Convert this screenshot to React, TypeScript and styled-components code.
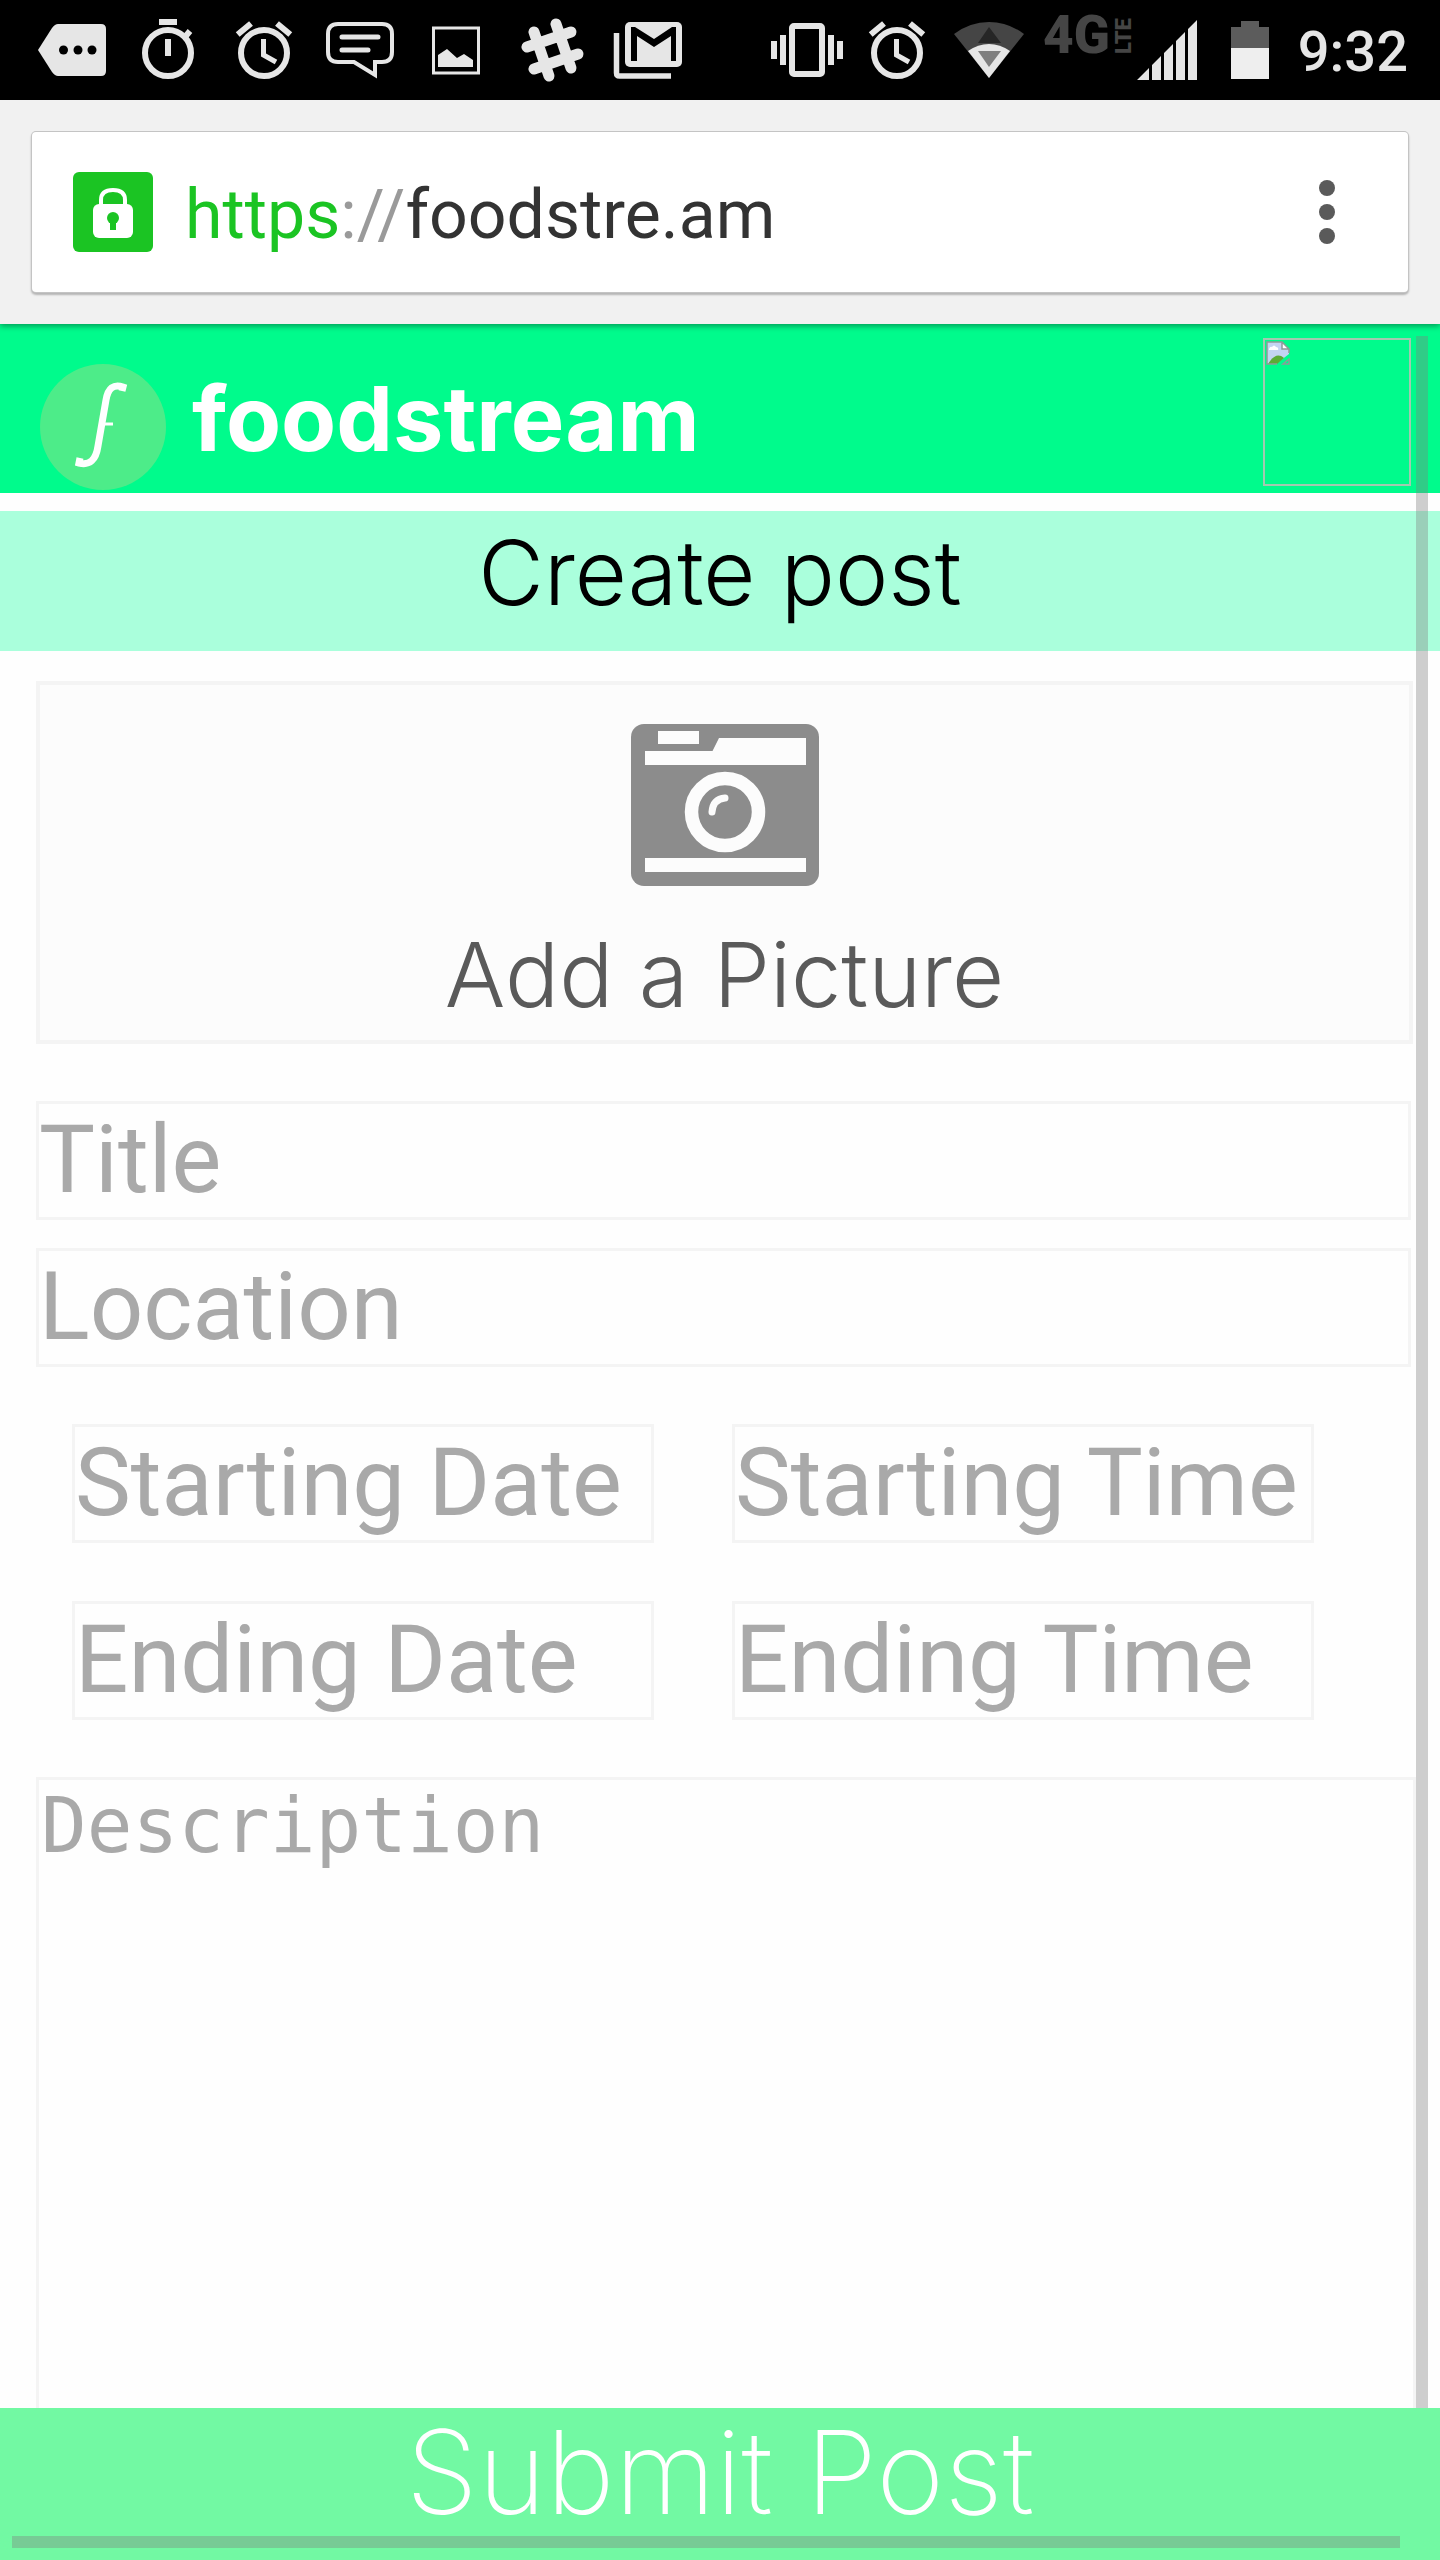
import React from "react";
import styled, { createGlobalStyle } from "styled-components";

const ink = "#e6e6e6";
const uiFont = `Roboto, "Noto Sans", sans-serif`;
const brandFont = `Inter, "Open Sans", sans-serif`;

const GlobalStyle = createGlobalStyle`
  *, *::before, *::after { box-sizing: border-box; }
  body { margin: 0; background: #fefefe; font-family: ${uiFont}; }
`;

const Screen = styled.div`
  position: relative;
  display: flex;
  flex-direction: column;
  min-height: 100vh;
`;

/* ---------- system status bar ---------- */

const StatusBar = styled.div`
  display: flex;
  justify-content: space-between;
  align-items: center;
  height: 100px;
  padding: 0 32px 0 36px;
  background: #000;
`;

const StatusGroup = styled.div<{ $gap: number }>`
  display: flex;
  align-items: center;
  gap: ${(p) => p.$gap}px;
`;

const StatusIcon = styled.svg`
  display: block;
  flex: none;
  height: 72px;
  overflow: visible;
`;

const Clock = styled.time`
  padding-top: 4px;
  color: ${ink};
  font-size: 56px;
  font-weight: 500;
  line-height: 64px;
`;

/* ---------- browser toolbar ---------- */

const Toolbar = styled.div`
  position: relative;
  z-index: 1;
  padding: 32px;
  background: #f1f1f1;
  box-shadow: 0 2px 6px rgba(0, 0, 0, 0.4);
`;

const Omnibox = styled.div`
  display: flex;
  align-items: center;
  height: 160px;
  padding: 0 73px 0 41px;
  background: #fff;
  border-radius: 4px;
  box-shadow: 0 0 0 1px #c4c4c4, 0 2px 2px 1px rgba(0, 0, 0, 0.25);
`;

const LockBadge = styled.svg`
  display: block;
  flex: none;
  width: 80px;
  height: 80px;
`;

const Address = styled.a`
  flex: 1;
  padding: 6px 0 0 32px;
  color: #333;
  font-size: 68px;
  line-height: 80px;
  text-decoration: none;
`;

const AddressPart = styled.span<{ $color: string }>`
  color: ${(p) => p.$color};
`;

const MenuButton = styled.button`
  display: flex;
  flex-direction: column;
  gap: 8px;
  padding: 0;
  border: 0;
  background: none;
`;

const Dot = styled.span`
  width: 16px;
  height: 16px;
  border-radius: 50%;
  background: #5a5a5a;
`;

/* ---------- site header ---------- */

const Header = styled.header`
  display: flex;
  justify-content: space-between;
  align-items: flex-start;
  height: 169px;
  padding: 14px 29px 0 40px;
  background: #00fb8c;
`;

const Brand = styled.a`
  display: flex;
  align-items: center;
  gap: 26px;
  padding-top: 25px;
  color: #fff;
  font-family: ${brandFont};
  font-size: 90px;
  font-weight: 700;
  line-height: 112px;
  text-decoration: none;
`;

const BrandName = styled.span`
  padding-bottom: 16px;
`;

const Avatar = styled.svg`
  display: block;
  width: 148px;
  height: 148px;
`;

const PageTitle = styled.h1`
  margin: 18px 0 0;
  padding: 6px 0 22px;
  background: #aaffdc;
  color: #000;
  font-family: ${brandFont};
  font-size: 90px;
  font-weight: 300;
  line-height: 112px;
  text-align: center;
`;

/* ---------- form ---------- */

const Form = styled.form`
  display: flex;
  flex: 1;
  flex-direction: column;
  padding-top: 30px;
`;

const Fields = styled.div`
  display: flex;
  flex: 1;
  flex-direction: column;
  gap: 57px;
  padding: 0 24px 0 36px;
`;

const PictureButton = styled.button`
  display: flex;
  flex-direction: column;
  align-items: center;
  gap: 33px;
  margin-right: 3px;
  padding: 39px 0 9px;
  border: 4px solid #f4f4f4;
  background: #fcfcfc;
  color: #5a5a5a;
  font-family: ${brandFont};
  font-size: 90px;
  font-weight: 300;
  line-height: 112px;
`;

const FieldStack = styled.div`
  display: flex;
  flex-direction: column;
  gap: 28px;
  margin-right: 5px;
`;

const Schedule = styled.div`
  display: grid;
  grid-template-columns: 1fr 1fr;
  gap: 58px 78px;
  padding: 0 102px 0 36px;
`;

const TextField = styled.input`
  display: block;
  width: 100%;
  min-width: 0;
  height: 119px;
  padding: 0 0 1px;
  border: 3px solid #f4f4f4;
  border-radius: 0;
  background: #fefefe;
  color: #333;
  font-family: ${uiFont};
  font-size: 94px;
  outline: 0;
  &::placeholder { color: #a9a9a9; opacity: 1; }
`;

const Description = styled.textarea`
  display: block;
  flex: 1;
  width: 100%;
  min-height: 320px;
  padding: 2px 0 0 2px;
  border: 3px solid #f4f4f4;
  border-bottom: 0;
  border-radius: 0;
  background: #fefefe;
  color: #333;
  font-family: "DejaVu Sans Mono", monospace;
  font-size: 76px;
  line-height: 88px;
  outline: 0;
  resize: none;
  &::placeholder { color: #a9a9a9; opacity: 1; }
`;

const SubmitButton = styled.button`
  height: 152px;
  padding: 0 0 24px;
  border: 0;
  background: #72f9a3;
  color: #fff;
  font-family: ${brandFont};
  font-size: 116px;
  font-weight: 200;
  line-height: 128px;
`;

/* ---------- overlay scroll indicators ---------- */

const ScrollThumb = styled.div<{ $axis: "x" | "y" }>`
  position: absolute;
  z-index: 2;
  background: rgba(128, 128, 128, 0.376);
  ${(p) =>
    p.$axis === "y"
      ? "top: 336px; right: 12px; bottom: 152px; width: 12px;"
      : "left: 12px; right: 40px; bottom: 12px; height: 12px;"}
`;

const MoreIcon = () => (
  <StatusIcon width="72" viewBox="0 0 72 72">
    <path d="M2 36 16 14q3-4 6-4H65q5 0 5 5V57q0 5-5 5H22q-3 0-6-4Z" fill={ink} />
    <circle cx="27.5" cy="36" r="4.5" />
    <circle cx="42" cy="36" r="4.5" />
    <circle cx="56" cy="36" r="4.5" />
  </StatusIcon>
);

const TimerIcon = () => (
  <StatusIcon width="72" viewBox="0 0 72 72" fill="none" stroke={ink} strokeWidth="6">
    <circle cx="36" cy="39" r="23" />
    <path d="M27 8H45M36 25V42M53 23l5-6" />
  </StatusIcon>
);

const AlarmIcon = () => (
  <StatusIcon width="72" viewBox="0 0 72 72" fill="none" stroke={ink} strokeWidth="6">
    <circle cx="36" cy="39" r="23" />
    <path d="M9.700 20.500 23 9.500M49 9.500l13.300 11" />
    <path d="M35.500 25V41L48 48" strokeWidth="5" />
  </StatusIcon>
);

const MessageIcon = () => (
  <StatusIcon width="72" viewBox="0 0 72 72" fill="none" stroke={ink} strokeWidth="4">
    <path d="M14 10H58Q68 10 68 20V38Q68 48 58 48H51V61L30 48H14Q4 48 4 38V20Q4 10 14 10Z" />
    <path d="M18 23H54M18 36H44" strokeWidth="5" strokeLinecap="round" />
  </StatusIcon>
);

const PhotoIcon = () => (
  <StatusIcon width="72" viewBox="0 0 72 72">
    <rect x="13.500" y="14" width="45" height="45" fill="none" stroke={ink} strokeWidth="3" />
    <path d="M18 41 27 35 37 44 44 40 53 46V53H18Z" fill={ink} />
  </StatusIcon>
);

const HashIcon = () => (
  <StatusIcon width="72" viewBox="0 0 72 72" fill="none" stroke={ink} strokeWidth="11" strokeLinecap="round">
    <path d="M18 18 33 62M40 10 55 54M11 33 55 18M18 55 62 40" />
  </StatusIcon>
);

const MailIcon = () => (
  <StatusIcon width="72" viewBox="0 0 72 72">
    <path d="M4.500 19V59Q4.500 62 7.500 62H59" fill="none" stroke={ink} strokeWidth="5.500" />
    <rect x="13" y="8" width="57" height="45" rx="5" fill={ink} />
    <path d="M19 47V13H23L42 25 60 13H64V47H59V22L42 33 25 22V47Z" />
  </StatusIcon>
);

const VibrateIcon = () => (
  <StatusIcon width="72" viewBox="0 0 72 72" fill={ink}>
    <rect x="21" y="12" width="30" height="48" rx="2" fill="none" stroke={ink} strokeWidth="6" />
    <path d="M0 27H6V45H0ZM9 21H15V51H9ZM57 21H63V51H57ZM66 27H72V45H66Z" />
  </StatusIcon>
);

const WifiIcon = () => (
  <StatusIcon width="72" viewBox="0 0 72 72">
    <path d="M38 64 3 20Q19 8 38 8T73 20Z" fill="#454545" />
    <path d="M27 29 38 13 50 29Z" fill="#262626" />
    <path d="M38 64 17 37Q27 30 38 30T59 37Z" fill={ink} />
    <path d="M27 37H50L38 53Z" fill="#7f7f7f" />
  </StatusIcon>
);

const SignalIcon = () => (
  <StatusIcon width="158" viewBox="0 0 158 72">
    <g fill="#454545" fontFamily="Roboto, sans-serif">
      <text x="2" y="39" fontSize="53" fontWeight="900">4G</text>
      <text transform="translate(90 40) rotate(-90)" fontSize="22" fontWeight="900">LTE</text>
    </g>
    <path
      d="M96 66 108 54V66ZM111 66V51L120 42V66ZM123 66V39L132 30V66ZM135 66V27L144 18V66ZM147 66V15L156 6V66Z"
      fill={ink}
    />
  </StatusIcon>
);

const BatteryIcon = () => (
  <StatusIcon width="63" viewBox="0 0 63 72">
    <path d="M14 34V13H24V7H42V13H52V34Z" fill="#5c5c5c" />
    <path d="M14 34H52V65H14Z" fill="#eee" />
  </StatusIcon>
);

const CameraIcon = () => (
  <svg width="188" height="162" viewBox="0 0 188 162">
    <rect width="188" height="162" rx="13" fill="#8c8c8c" />
    <path
      d="M27 7H68V20H27ZM14 27H81.500L88 14H175V41H14ZM14 134H175V148H14Z"
      fill="#fcfcfc"
    />
    <g fill="none" stroke="#fcfcfc">
      <circle cx="94" cy="88" r="33.500" strokeWidth="13.500" />
      <path d="M81 88Q82 75 94 74" strokeWidth="7" strokeLinecap="round" />
    </g>
  </svg>
);

const LogoMark = () => (
  <svg width="126" height="126" viewBox="0 0 126 126">
    <circle cx="63" cy="63" r="63" fill="#4dec89" />
    <g fill="none" stroke="#fff">
      <path d="M82 27 83 23Q69 18 66 36L58 82Q55 103 39 99L40 94" strokeWidth="7" />
      <path d="M62 60H73" strokeWidth="3" />
    </g>
  </svg>
);

const BrokenAvatar = () => (
  <Avatar viewBox="0 0 148 148" role="img" aria-label="Profile picture">
    <rect x="1" y="1" width="146" height="146" fill="none" stroke="#a3c9b0" strokeWidth="2" />
    <path d="M4 4H19L26 11V16L13 26H4Z" fill="#c3d4f2" />
    <path d="M6 11q1-3 3-2 2-3 4 0 3 0 2 3H6Z" fill="#fff" />
    <path d="M5 26Q13 13 21 20L14 26Z" fill="#5cab36" />
    <path d="M19 4V11H26Z" fill="#fff" />
    <path d="M14 26H4V4H19L26 11V15M19 4V11H26M20 26H26V21Z" fill="none" stroke="#8f9a98" strokeWidth="1.500" />
  </Avatar>
);

export default function App() {
  return (
    <Screen>
      <GlobalStyle />
      <StatusBar>
        <StatusGroup $gap={24}>
          <MoreIcon />
          <TimerIcon />
          <AlarmIcon />
          <MessageIcon />
          <PhotoIcon />
          <HashIcon />
          <MailIcon />
        </StatusGroup>
        <StatusGroup $gap={18}>
          <VibrateIcon />
          <AlarmIcon />
          <WifiIcon />
          <SignalIcon />
          <BatteryIcon />
          <Clock>9:32</Clock>
        </StatusGroup>
      </StatusBar>

      <Toolbar>
        <Omnibox>
          <LockBadge viewBox="0 0 80 80">
            <rect width="80" height="80" rx="6" fill="#1bc423" />
            <path d="M28 34V28Q28 18 40 18T52 28V34" fill="none" stroke="#fff" strokeWidth="4" />
            <rect x="20" y="32" width="40" height="34" rx="6" fill="#fff" />
            <circle cx="40" cy="46" r="6" fill="#1bc423" />
            <path d="M37 48H43V58H37Z" fill="#1bc423" />
          </LockBadge>
          <Address href="#">
            <AddressPart $color="#1bc423">https</AddressPart>
            <AddressPart $color="#9a9a9a">://</AddressPart>
            foodstre.am
          </Address>
          <MenuButton type="button" aria-label="Menu">
            <Dot />
            <Dot />
            <Dot />
          </MenuButton>
        </Omnibox>
      </Toolbar>

      <Header>
        <Brand href="#">
          <LogoMark />
          <BrandName>foodstream</BrandName>
        </Brand>
        <BrokenAvatar />
      </Header>
      <PageTitle>Create post</PageTitle>

      <Form onSubmit={(e: React.FormEvent) => e.preventDefault()}>
        <Fields>
          <PictureButton type="button">
            <CameraIcon />
            Add a Picture
          </PictureButton>
          <FieldStack>
            <TextField aria-label="Title" placeholder="Title" />
            <TextField aria-label="Location" placeholder="Location" />
          </FieldStack>
          <Schedule>
            <TextField aria-label="Starting Date" placeholder="Starting Date" />
            <TextField aria-label="Starting Time" placeholder="Starting Time" />
            <TextField aria-label="Ending Date" placeholder="Ending Date" />
            <TextField aria-label="Ending Time" placeholder="Ending Time" />
          </Schedule>
          <Description aria-label="Description" placeholder="Description" />
        </Fields>
        <SubmitButton type="submit">Submit Post</SubmitButton>
      </Form>

      <ScrollThumb $axis="y" />
      <ScrollThumb $axis="x" />
    </Screen>
  );
}
